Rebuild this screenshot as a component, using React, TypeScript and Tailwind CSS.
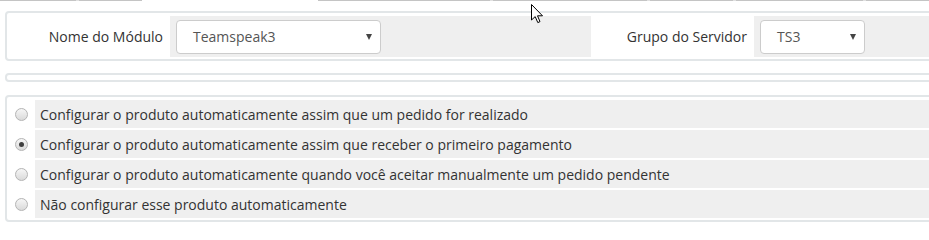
import { ReactNode } from "react";

const font = { fontFamily: '"Open Sans", "Liberation Sans", sans-serif' };

function Panel({ children, className = "" }: { children: ReactNode; className?: string }) {
  return (
    <div className={`ml-[5px] w-[960px] rounded-[4px] border-2 border-[#e2e6e8] bg-white ${className}`}>
      {children}
    </div>
  );
}

function Select({ value, width }: { value: string; width: string }) {
  return (
    <div
      className={`relative flex h-[34px] items-center rounded-[4px] border border-[#cccccc] bg-white pl-[16px] text-[14px] text-[#555555] ${width}`}
    >
      <span>{value}</span>
      <span className="absolute right-[8px] top-[13px] h-0 w-0 border-x-[3.5px] border-t-[6px] border-x-transparent border-t-[#444444]" />
    </div>
  );
}

function Radio({ checked = false }: { checked?: boolean }) {
  return (
    <span className="flex h-[13px] w-[13px] items-center justify-center rounded-full border border-[#b4b4b4] bg-gradient-to-b from-[#f6f6f6] to-[#dadada]">
      {checked && <span className="h-[5px] w-[5px] rounded-full bg-[#3f3f3f]" />}
    </span>
  );
}

const options = [
  { label: "Configurar o produto automaticamente assim que um pedido for realizado", checked: false },
  { label: "Configurar o produto automaticamente assim que receber o primeiro pagamento", checked: true },
  {
    label: "Configurar o produto automaticamente quando você aceitar manualmente um pedido pendente",
    checked: false,
  },
  { label: "Não configurar esse produto automaticamente", checked: false },
];

function Cursor() {
  return (
    <svg className="absolute left-[531px] top-[4px]" width="13" height="20" viewBox="0 0 13 20">
      <path
        d="M0.5 0.5 L0.5 16 L4.2 12.6 L6.8 18.6 L9 17.6 L6.5 11.8 L11.5 11.8 Z"
        fill="#ffffff"
        stroke="#000000"
        strokeWidth="1"
        strokeLinejoin="round"
      />
    </svg>
  );
}

export default function App() {
  return (
    <div className="relative h-[226px] w-[929px] overflow-hidden bg-white text-[#333333]" style={font}>
      <div className="flex h-[1px]">
        <div className="w-[76px] bg-[#c4c4c4]" />
        <div className="w-[3px] bg-[#e0e0e0]" />
        <div className="w-[63px] bg-[#c4c4c4]" />
        <div className="w-[176px] bg-white" />
        <div className="w-[172px] bg-[#c4c4c4]" />
        <div className="w-[3px] bg-[#e0e0e0]" />
        <div className="w-[154px] bg-[#c4c4c4]" />
        <div className="w-[3px] bg-[#e0e0e0]" />
        <div className="w-[83px] bg-[#c4c4c4]" />
        <div className="w-[3px] bg-[#e0e0e0]" />
        <div className="w-[127px] bg-[#c4c4c4]" />
        <div className="w-[3px] bg-[#e0e0e0]" />
        <div className="flex-1 bg-[#c4c4c4]" />
      </div>

      <Panel className="mt-[10px] pb-[2px] pl-[2px] pt-[3px]">
        <div className="flex h-[41px] gap-[2px] text-[14px]">
          <div className="flex w-[159px] items-center justify-end pr-[5px]">Nome do Módulo</div>
          <div className="flex w-[421px] items-center bg-[#efefef] pl-[6px]">
            <Select value="Teamspeak3" width="w-[205px]" />
          </div>
          <div className="flex w-[159px] items-center justify-end pr-[5px]">Grupo do Servidor</div>
          <div className="flex flex-1 items-center bg-[#efefef] pl-[6px]">
            <Select value="TS3" width="w-[105px]" />
          </div>
        </div>
      </Panel>

      <Panel className="mt-[12px] h-[9px]">
        <div />
      </Panel>

      <Panel className="mt-[13px] pb-[2px] pl-[2px] pt-[3px]">
        <div className="flex flex-col gap-[2px] text-[14px]">
          {options.map((o) => (
            <div key={o.label} className="flex h-[28px] gap-[2px]">
              <div className="flex w-[24px] items-center justify-center">
                <Radio checked={o.checked} />
              </div>
              <div className="flex flex-1 items-center bg-[#efefef] pl-[5px]">{o.label}</div>
            </div>
          ))}
        </div>
      </Panel>

      <Cursor />
    </div>
  );
}
